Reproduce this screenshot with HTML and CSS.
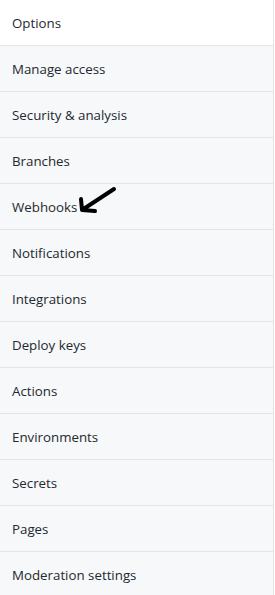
FILE: index.html
```html
<!DOCTYPE html>
<html lang="en">
<head>
  <meta charset="UTF-8" />
  <title>Settings</title>
  <link rel="stylesheet" href="styles.css">
</head>
<body>
  <nav class="menu">
    <a class="menu-item selected" href="#">Options</a>
    <a class="menu-item" href="#">Manage access</a>
    <a class="menu-item" href="#">Security &amp; analysis</a>
    <a class="menu-item" href="#">Branches</a>
    <a class="menu-item" href="#">Webhooks
      <svg class="arrow" width="42" height="30" viewBox="0 0 42 30">
        <path d="M36 3 L4 24 M3 13 L4 24 L17 25" fill="none" stroke="#000" stroke-width="4" stroke-linecap="round" stroke-linejoin="round"/>
      </svg>
    </a>
    <a class="menu-item" href="#">Notifications</a>
    <a class="menu-item" href="#">Integrations</a>
    <a class="menu-item" href="#">Deploy keys</a>
    <a class="menu-item" href="#">Actions</a>
    <a class="menu-item" href="#">Environments</a>
    <a class="menu-item" href="#">Secrets</a>
    <a class="menu-item" href="#">Pages</a>
    <a class="menu-item" href="#">Moderation settings</a>
  </nav>
</body>
</html>
```

FILE: styles.css
```css
body {
  margin: 0;
  background-color: #fff;
  font-family: "Open Sans", Arial, sans-serif;
}

.menu {
  width: 273px;
  border-right: 1px solid #e1e4e8;
  display: flex;
  flex-direction: column;
}

.menu-item {
  position: relative;
  display: block;
  height: 44px;
  padding: 1px 12px 0;
  line-height: 44px;
  font-size: 13.3px;
  color: #24292e;
  text-decoration: none;
  background-color: #f6f8fa;
  border-bottom: 1px solid #e1e4e8;
}

.menu-item.selected {
  background-color: #fff;
}

.arrow {
  position: absolute;
  left: 78px;
  top: 2px;
}
```
